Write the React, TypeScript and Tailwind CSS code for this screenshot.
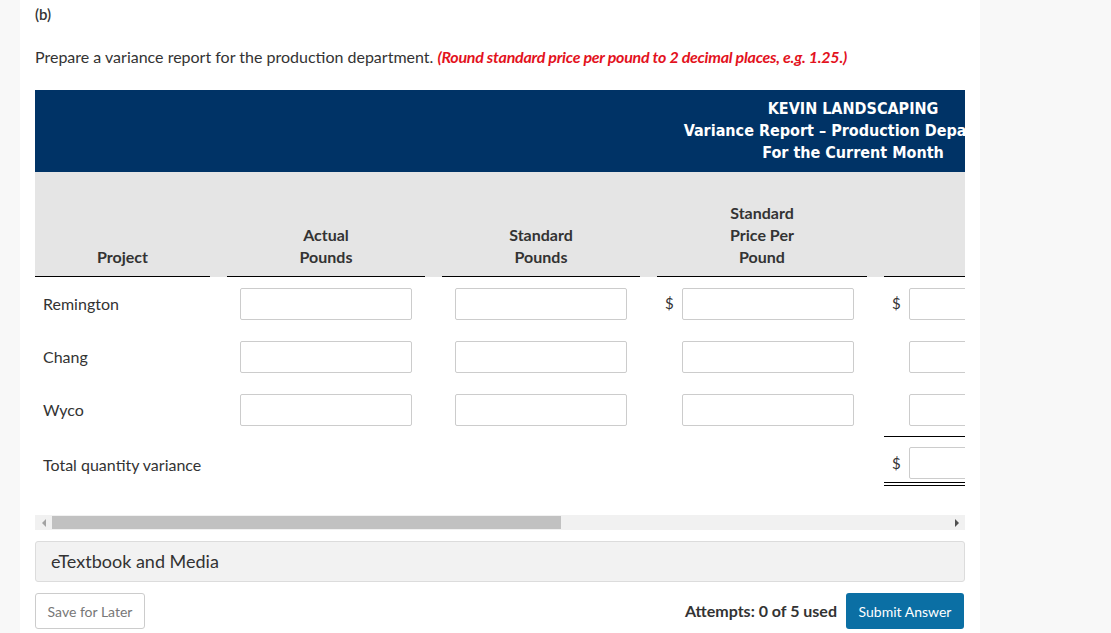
import React from "react";

const grid =
  "grid grid-cols-[175px_198px_198px_210px_210px_1fr] gap-x-[17px]";

const projects = ["Remington", "Chang", "Wyco"];

function Box() {
  return (
    <div className="h-[32px] w-[172px] rounded-[2px] border border-[#cccccc] bg-white" />
  );
}

function Dollar({ show }: { show: boolean }) {
  return (
    <div className="flex items-center pl-[8px]">
      <span className="w-[17px] text-[15px] text-[#333]">{show ? "$" : ""}</span>
      <Box />
    </div>
  );
}

export default function App() {
  return (
    <div className="flex min-h-[633px] bg-[#f8f8f8] font-['Lato',sans-serif] text-[#333]">
      <div className="w-[20px] shrink-0" />
      <div className="w-[960px] shrink-0 bg-white px-[15px]">
        <div className="mt-[4px] text-[15px] leading-[20px] font-semibold">(b)</div>
        <p className="mt-[22px] text-[16px] leading-[22px]">
          Prepare a variance report for the production department.{" "}
          <span className="font-bold italic tracking-[-0.25px] text-[#e3121d]">
            (Round standard price per pound to 2 decimal places, e.g. 1.25.)
          </span>
        </p>

        <div className="mt-[22px] w-[930px] overflow-hidden">
          <div className="w-[1636px]">
            <div className="h-[82px] bg-[#003366] pt-[8px] text-center font-['DejaVu_Sans_Condensed','DejaVu_Sans',sans-serif] text-[16px] leading-[22px] font-bold text-white">
              <div>KEVIN LANDSCAPING</div>
              <div>Variance Report – Production Department</div>
              <div>For the Current Month</div>
            </div>

            <div className={`${grid} h-[105px] items-end bg-[#e5e5e5] text-center text-[16px] leading-[22px] font-bold`}>
              <div className="border-b border-black pb-[8px]">Project</div>
              <div className="border-b border-black pb-[8px]">
                Actual
                <br />
                Pounds
              </div>
              <div className="border-b border-black pb-[8px]">
                Standard
                <br />
                Pounds
              </div>
              <div className="border-b border-black pb-[8px]">
                Standard
                <br />
                Price Per
                <br />
                Pound
              </div>
              <div className="border-b border-black pb-[8px]">&nbsp;</div>
              <div className="border-b border-black pb-[8px]">&nbsp;</div>
            </div>

            {projects.map((p, i) => (
              <div key={p} className={`${grid} h-[53px] items-center text-[16px]`}>
                <div className="pt-[1px] pl-[8px]">{p}</div>
                <div className="px-[13px]">
                  <Box />
                </div>
                <div className="px-[13px]">
                  <Box />
                </div>
                <Dollar show={i === 0} />
                <Dollar show={i === 0} />
                <div />
              </div>
            ))}

            <div className={`${grid} text-[16px]`}>
              <div className="flex items-center pt-[8px] pl-[8px]">Total quantity variance</div>
              <div />
              <div />
              <div />
              <div className="border-t border-b-4 border-double border-black pt-[10px] pb-[3px]">
                <Dollar show />
              </div>
              <div />
            </div>
          </div>
        </div>

        <div className="mt-[29px] flex h-[15px] w-[930px] items-center bg-[#f1f1f1]">
          <div className="flex w-[17px] justify-center">
            <div className="h-0 w-0 border-y-[4px] border-r-[4px] border-y-transparent border-r-[#a3a3a3]" />
          </div>
          <div className="h-[13px] w-[509px] bg-[#c1c1c1]" />
          <div className="flex-1" />
          <div className="flex w-[16px] justify-center">
            <div className="h-0 w-0 border-y-[4px] border-l-[4px] border-y-transparent border-l-[#505050]" />
          </div>
        </div>

        <div className="mt-[11px] flex h-[41px] w-[930px] items-center rounded-[3px] border border-[#dcdcdc] bg-[#f2f2f2] pl-[15px] text-[18px]">
          eTextbook and Media
        </div>

        <div className="mt-[11px] flex w-[930px] items-center justify-between">
          <button
            type="button"
            className="h-[36px] w-[110px] rounded-[3px] border border-[#cccccc] bg-white text-[14px] text-[#777]"
          >
            Save for Later
          </button>
          <div className="flex items-center gap-[9px] pr-[1px]">
            <span className="text-[16px] font-bold text-[#333]">Attempts: 0 of 5 used</span>
            <button
              type="button"
              className="h-[36px] w-[118px] rounded-[3px] bg-[#0b6fa4] text-[14px] text-white"
            >
              Submit Answer
            </button>
          </div>
        </div>
      </div>
      <div className="flex-1" />
    </div>
  );
}
